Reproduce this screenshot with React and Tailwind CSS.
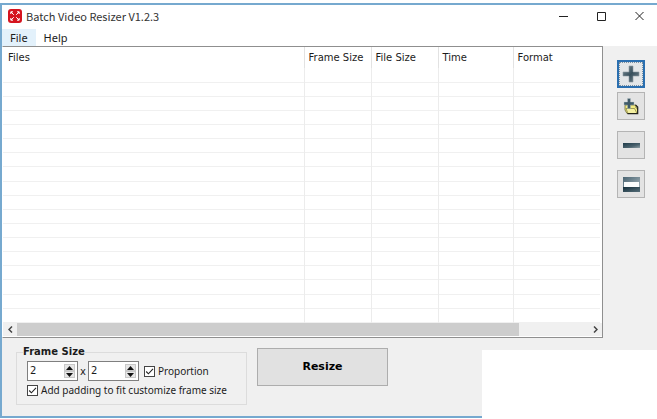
import { useState } from "react";

const ROWS = Array.from({ length: 18 }, (_, i) => i);

const AppLogo = () => (
  <svg width="14" height="14" viewBox="0 0 14 14" aria-hidden="true">
    <rect width="14" height="14" rx="3" fill="#d5141f" />
    <g stroke="#fff" strokeWidth="1" fill="none">
      <path d="M5.8 5.8L3 3M8.2 5.8L11 3M5.8 8.2L3 11M8.2 8.2L11 11" />
      <path d="M2.8 5V2.8H5M9 2.8H11.2V5M2.8 9V11.2H5M9 11.2H11.2V9" />
    </g>
  </svg>
);

const PlusIcon = () => (
  <svg width="18" height="18" viewBox="0 0 18 18" aria-hidden="true">
    <defs>
      <linearGradient id="plus" x1="0" y1="0" x2="1" y2="1">
        <stop offset="0" stopColor="#7d8f98" />
        <stop offset="0.5" stopColor="#38505d" />
        <stop offset="1" stopColor="#7b8b93" />
      </linearGradient>
    </defs>
    <path d="M7 1H11V7H17V11H11V17H7V11H1V7H7Z" fill="url(#plus)" stroke="#8b989e" strokeWidth="0.6" />
  </svg>
);

const FolderIcon = () => (
  <svg width="18" height="18" viewBox="0 0 18 18" aria-hidden="true">
    <path d="M3 8H14V11H15.5V16.5H5L3 13Z" fill="#f2ec83" stroke="#5a5828" strokeWidth="0.7" />
    <path d="M4 11.5H12.5L15 16.5H6Z" fill="#f4f0a0" stroke="#6b6830" strokeWidth="0.6" />
    <path d="M13.5 8L15.7 10V16.7H5.5" fill="none" stroke="#23231a" strokeWidth="1.2" />
    <path d="M5.5 1.5H8.5V5H12V8H8.5V11.5H5.5V8H2V5H5.5Z" fill="#3f5a68" stroke="#b9c6ca" strokeWidth="0.4" />
  </svg>
);

const MinusIcon = () => (
  <svg width="18" height="18" viewBox="0 0 18 18" aria-hidden="true">
    <defs>
      <linearGradient id="minus" x1="0" y1="0" x2="1" y2="1">
        <stop offset="0" stopColor="#1f3b49" />
        <stop offset="0.6" stopColor="#4a626d" />
        <stop offset="1" stopColor="#8fa0a6" />
      </linearGradient>
    </defs>
    <rect x="1" y="7" width="17" height="5" fill="url(#minus)" />
  </svg>
);

const ClearIcon = () => (
  <svg width="18" height="18" viewBox="0 0 18 18" aria-hidden="true">
    <defs>
      <linearGradient id="clearTop" x1="0" y1="0" x2="1" y2="1">
        <stop offset="0" stopColor="#4a6472" />
        <stop offset="1" stopColor="#aebcc2" />
      </linearGradient>
      <linearGradient id="clearBottom" x1="0" y1="0" x2="1" y2="1">
        <stop offset="0" stopColor="#142e3b" />
        <stop offset="1" stopColor="#566e79" />
      </linearGradient>
    </defs>
    <rect x="1" y="2" width="17" height="15" fill="url(#clearTop)" />
    <rect x="2" y="7" width="15" height="5" fill="#fafcfc" />
    <rect x="1" y="12" width="17" height="5" fill="url(#clearBottom)" />
  </svg>
);

const ToolButton = ({ label, focused, children }) => (
  <button
    type="button"
    aria-label={label}
    className={
      focused
        ? "flex h-7 w-7 items-center justify-center border-2 border-[#2a6fb0] bg-[#e3e6e8] outline-1 -outline-offset-3 outline-dotted outline-[#7a8fa0]"
        : "flex h-7 w-7 items-center justify-center border border-[#b4b4b4] bg-[#e3e3e3]"
    }
  >
    {children}
  </button>
);

const Spinner = ({ label, value, onChange }) => (
  <div className="flex h-5 w-[51px] items-center border border-[#7f7f7f] bg-white pr-0.5">
    <input
      type="text"
      aria-label={label}
      value={value}
      onChange={(e) => onChange(Number(e.target.value) || 0)}
      className="w-full min-w-0 flex-1 pl-0.5 leading-4 outline-none"
    />
    <div className="flex flex-col">
      <button
        type="button"
        aria-label={`Increase ${label}`}
        onClick={() => onChange(value + 1)}
        className="flex h-[7px] w-[11px] items-center justify-center border border-[#c8c8c8] bg-[#e6e6e6]"
      >
        <svg width="7" height="4" viewBox="0 0 7 4" className="shrink-0"><path d="M0 4L3.5 0L7 4Z" fill="#111" /></svg>
      </button>
      <button
        type="button"
        aria-label={`Decrease ${label}`}
        onClick={() => onChange(Math.max(0, value - 1))}
        className="flex h-[7px] w-[11px] items-center justify-center border border-[#c8c8c8] bg-[#e6e6e6]"
      >
        <svg width="7" height="4" viewBox="0 0 7 4" className="shrink-0"><path d="M0 0H7L3.5 4Z" fill="#111" /></svg>
      </button>
    </div>
  </div>
);

const CheckBox = ({ label, checked, onChange }) => (
  <label className="flex items-center gap-[3px] font-['Noto_Sans',sans-serif] whitespace-nowrap">
    <span className="grid h-[11px] w-[11px]">
      <input
        type="checkbox"
        checked={checked}
        onChange={(e) => onChange(e.target.checked)}
        className="peer col-start-1 row-start-1 h-[11px] w-[11px] appearance-none border border-[#444] bg-white"
      />
      <svg
        viewBox="0 0 11 11"
        className="pointer-events-none invisible col-start-1 row-start-1 h-[11px] w-[11px] peer-checked:visible"
      >
        <path d="M2.2 5.5L4.4 7.8L9 2.8" fill="none" stroke="#222" strokeWidth="1.1" />
      </svg>
    </span>
    {label}
  </label>
);

const FileTable = () => (
  <div className="flex min-w-0 flex-1 flex-col border border-[#8f8f8f] border-l-transparent bg-white">
    <div className="min-h-0 flex-1 pr-0.5">
      <table className="h-full w-full table-fixed border-collapse text-left">
        <colgroup>
          <col />
          <col className="w-[67px]" />
          <col className="w-[67px]" />
          <col className="w-[75px]" />
          <col className="w-[87px]" />
        </colgroup>
        <thead>
          <tr className="h-[21px]">
            <th className="border-r border-[#e2e2e2] px-[5px] font-normal">Files</th>
            <th className="border-r border-[#e2e2e2] px-1 font-normal whitespace-nowrap">Frame Size</th>
            <th className="border-r border-[#e2e2e2] px-1 font-normal">File Size</th>
            <th className="border-r border-[#e2e2e2] px-1 font-normal">Time</th>
            <th className="px-1 font-normal">Format</th>
          </tr>
        </thead>
        <tbody>
          {ROWS.map((row) => (
            <tr key={row} className="h-3.5 border-b border-[#f0f0f0]">
              <td className="border-r border-[#ececec]" />
              <td className="border-r border-[#ececec]" />
              <td className="border-r border-[#ececec]" />
              <td className="border-r border-[#ececec]" />
              <td />
            </tr>
          ))}
        </tbody>
      </table>
    </div>
    <div className="mb-px flex h-[13px] items-center bg-[#f0f0f0]">
      <button type="button" aria-label="Scroll left" className="flex h-full w-3.5 items-center justify-center">
        <svg width="5" height="7" viewBox="0 0 5 7"><path d="M4 0.5L1 3.5L4 6.5" fill="none" stroke="#444" strokeWidth="1.5" /></svg>
      </button>
      <div className="h-full flex-1">
        <div className="h-full w-[88%] bg-[#cdcdcd]" />
      </div>
      <button type="button" aria-label="Scroll right" className="flex h-full w-3.5 items-center justify-center">
        <svg width="5" height="7" viewBox="0 0 5 7"><path d="M1 0.5L4 3.5L1 6.5" fill="none" stroke="#444" strokeWidth="1.5" /></svg>
      </button>
    </div>
  </div>
);

const App = () => {
  const [width, setWidth] = useState(2);
  const [height, setHeight] = useState(2);
  const [proportion, setProportion] = useState(true);
  const [padding, setPadding] = useState(true);

  return (
    <div className="relative flex h-screen flex-col bg-white pt-[3px] pb-px font-['DejaVu_Sans','Verdana',sans-serif] text-[10px] text-[#1c1c1c]">
      <div className="flex min-h-0 flex-1 flex-col border-y-2 border-l-2 border-[#76a9cf] bg-[#f0f0f0]">
        {/* Title bar */}
        <header className="flex h-6 items-center bg-white pr-3 pb-0.5 pl-1.5 font-['Noto_Sans_CJK_SC',sans-serif] text-[11px]">
          <AppLogo />
          <h1 className="ml-1 flex-1 text-[#333]">Batch Video Resizer V1.2.3</h1>
          <div className="flex gap-7">
            <button type="button" aria-label="Minimize">
              <svg width="10" height="10" viewBox="0 0 10 10"><path d="M0 5.5H9" stroke="#222" /></svg>
            </button>
            <button type="button" aria-label="Maximize">
              <svg width="10" height="10" viewBox="0 0 10 10"><path d="M0.5 1.5H8.5V9.5H0.5Z" fill="none" stroke="#222" /></svg>
            </button>
            <button type="button" aria-label="Close">
              <svg width="10" height="10" viewBox="0 0 10 10"><path d="M0.5 1L8.5 9M8.5 1L0.5 9" stroke="#222" /></svg>
            </button>
          </div>
        </header>

        {/* Menu */}
        <nav className="flex h-[17px] bg-white font-['Noto_Sans',sans-serif] text-[11px] leading-4">
          <button type="button" className="bg-[#e3f1fb] px-2">File</button>
          <button type="button" className="px-2">Help</button>
        </nav>

        <main className="flex min-h-0 flex-1">
          <FileTable />
          <aside className="flex w-[54px] flex-col items-center gap-[11px] pt-3.5 pl-0.5">
            <div className="flex flex-col gap-1">
              <ToolButton label="Add files" focused><PlusIcon /></ToolButton>
              <ToolButton label="Add folder"><FolderIcon /></ToolButton>
            </div>
            <ToolButton label="Remove"><MinusIcon /></ToolButton>
            <ToolButton label="Clear all"><ClearIcon /></ToolButton>
          </aside>
        </main>

        <footer className="flex items-start gap-2.5 pt-2.5 pb-[11px] pl-3.5">
          <fieldset className="w-[231px] border border-[#dcdcdc] px-2.5 pb-1.5">
            <legend className="-ml-1 leading-2 font-bold">Frame Size</legend>
            <div className="flex items-center gap-[5px] pt-[5px]">
              <div className="flex items-center gap-px">
                <Spinner label="width" value={width} onChange={setWidth} />
                <span className="w-2 text-center">x</span>
                <Spinner label="height" value={height} onChange={setHeight} />
              </div>
              <CheckBox label="Proportion" checked={proportion} onChange={setProportion} />
            </div>
            <div className="pt-0.5">
              <CheckBox label="Add padding to fit customize frame size" checked={padding} onChange={setPadding} />
            </div>
          </fieldset>
          <button
            type="button"
            className="h-[38px] w-[131px] border border-[#adadad] bg-[#e1e1e1] text-[11px] font-bold text-black"
          >
            Resize
          </button>
        </footer>
      </div>

      {/* blank patch in the lower right corner */}
      <div className="absolute right-0 bottom-0 h-[69px] w-[175px] bg-white" />
    </div>
  );
};

export default App;
